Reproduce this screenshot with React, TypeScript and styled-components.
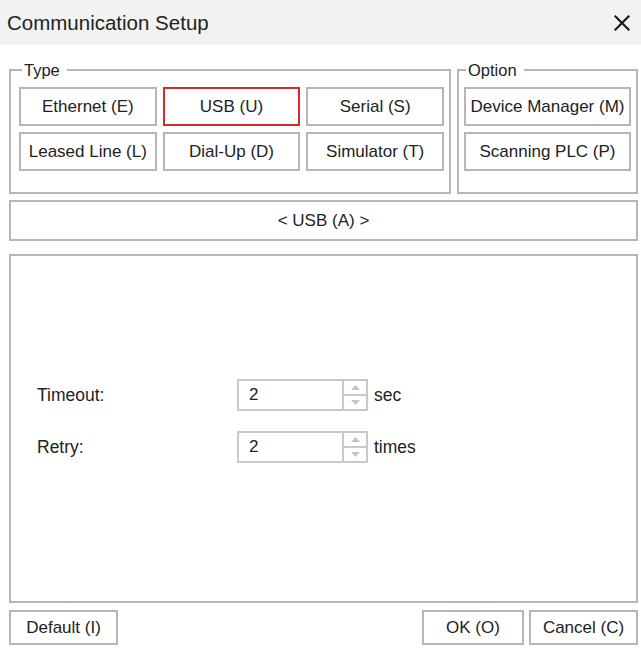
import React from "react";
import styled, { createGlobalStyle } from "styled-components";

const GlobalStyle = createGlobalStyle`
  html, body { margin: 0; padding: 0; background: #ffffff; }
  body { font-family: "Liberation Sans", Arial, sans-serif; color: #222; }
  * { box-sizing: border-box; }
`;

const Dialog = styled.div`
  width: 641px;
  height: 649px;
  background: #fff;
  display: flex;
  flex-direction: column;
`;

const TitleBar = styled.div`
  height: 45px;
  background: #f2f2f2;
  display: flex;
  align-items: center;
  justify-content: space-between;
  padding: 0 8px 0 7px;
`;

const Title = styled.div`
  font-size: 20.5px;
  color: #222;
`;

const CloseButton = styled.button`
  width: 22px;
  height: 22px;
  border: none;
  background: transparent;
  padding: 0;
  display: flex;
  align-items: center;
  justify-content: center;
  cursor: pointer;
`;

const Body = styled.div`
  flex: 1;
  display: flex;
  flex-direction: column;
  padding: 16px 3px 0 9px;
`;

const GroupRow = styled.div`
  display: flex;
  gap: 6px;
`;

const Group = styled.fieldset<{ $w?: number }>`
  margin: 0;
  min-width: 0;
  border: 2px solid #b6b6b6;
  padding: 8px 5px 21px ${(p) => (p.$w ? 8 : 5)}px;
  ${(p) => (p.$w ? `flex: 0 0 ${p.$w}px;` : `flex: 1;`)}
`;

const Legend = styled.legend<{ $indent: number }>`
  font-size: 16.5px;
  line-height: 18px;
  padding: 0 7px 0 2px;
  margin-left: ${(p) => p.$indent}px;
  color: #222;
`;

const ButtonGrid = styled.div<{ $cols: number }>`
  display: grid;
  grid-template-columns: repeat(${(p) => p.$cols}, 1fr);
  column-gap: 6px;
  row-gap: 6px;
`;

const TypeButton = styled.button<{ $active?: boolean }>`
  height: 39px;
  border: 2px solid ${(p) => (p.$active ? "#d42a2a" : "#b6b6b6")};
  background: #fff;
  font-family: "Liberation Sans", Arial, sans-serif;
  font-size: 17px;
  color: #222;
  padding: 0 1px;
  white-space: nowrap;
  cursor: pointer;
`;

const ModeBar = styled.div`
  margin-top: 6px;
  height: 41px;
  border: 2px solid #b6b6b6;
  display: flex;
  align-items: center;
  justify-content: center;
  font-size: 17px;
  color: #222;
`;

const Panel = styled.div`
  margin-top: 13px;
  height: 349px;
  border: 2px solid #b6b6b6;
  padding: 123px 0 0 26px;
  display: grid;
  grid-template-columns: 200px 131px auto;
  grid-auto-rows: 32px;
  row-gap: 20px;
  align-content: start;
  align-items: center;
`;

const FieldLabel = styled.div`
  font-size: 17.5px;
  color: #222;
`;

const Spin = styled.div`
  height: 32px;
  border: 2px solid #c9c9c9;
  display: flex;
`;

const SpinValue = styled.div`
  flex: 1;
  display: flex;
  align-items: center;
  padding-left: 10px;
  font-size: 17px;
  color: #222;
`;

const SpinArrows = styled.div`
  width: 24px;
  border-left: 2px solid #c9c9c9;
  display: flex;
  flex-direction: column;
`;

const SpinArrow = styled.div<{ $top?: boolean }>`
  flex: 1;
  display: flex;
  align-items: center;
  justify-content: center;
  ${(p) => (p.$top ? "border-bottom: 2px solid #c9c9c9;" : "")}
`;

const Unit = styled.div`
  font-size: 17.5px;
  color: #222;
  padding-left: 6px;
`;

const Footer = styled.div`
  margin-top: 7px;
  display: flex;
  justify-content: space-between;
`;

const FooterGroup = styled.div`
  display: flex;
  gap: 5px;
`;

const FooterButton = styled.button<{ $w: number }>`
  width: ${(p) => p.$w}px;
  height: 35px;
  border: 2px solid #b6b6b6;
  background: #fff;
  font-family: "Liberation Sans", Arial, sans-serif;
  font-size: 17px;
  color: #222;
  padding: 0;
  cursor: pointer;
`;

const Triangle = ({ up }: { up?: boolean }) => (
  <svg width="9" height="5" viewBox="0 0 9 5">
    <polygon points={up ? "0,5 9,5 4.5,0" : "0,0 9,0 4.5,5"} fill="#c4c4c4" />
  </svg>
);

const SpinBox = ({ value }: { value: string }) => (
  <Spin>
    <SpinValue>{value}</SpinValue>
    <SpinArrows>
      <SpinArrow $top>
        <Triangle up />
      </SpinArrow>
      <SpinArrow>
        <Triangle />
      </SpinArrow>
    </SpinArrows>
  </Spin>
);

export default function App() {
  const types = [
    "Ethernet (E)",
    "USB (U)",
    "Serial (S)",
    "Leased Line (L)",
    "Dial-Up (D)",
    "Simulator (T)",
  ];
  return (
    <>
      <GlobalStyle />
      <Dialog>
        <TitleBar>
          <Title>Communication Setup</Title>
          <CloseButton aria-label="Close">
            <svg width="16" height="16" viewBox="0 0 16 16">
              <path d="M1.5 1.5 L14.5 14.5 M14.5 1.5 L1.5 14.5" stroke="#1a1a1a" strokeWidth="2.2" strokeLinecap="square" />
            </svg>
          </CloseButton>
        </TitleBar>
        <Body>
          <GroupRow>
            <Group $w={442}>
              <Legend $indent={3}>Type</Legend>
              <ButtonGrid $cols={3}>
                {types.map((t) => (
                  <TypeButton key={t} $active={t === "USB (U)"}>
                    {t}
                  </TypeButton>
                ))}
              </ButtonGrid>
            </Group>
            <Group>
              <Legend $indent={2}>Option</Legend>
              <ButtonGrid $cols={1}>
                <TypeButton>Device Manager (M)</TypeButton>
                <TypeButton>Scanning PLC (P)</TypeButton>
              </ButtonGrid>
            </Group>
          </GroupRow>
          <ModeBar>&lt; USB (A) &gt;</ModeBar>
          <Panel>
            <FieldLabel>Timeout:</FieldLabel>
            <SpinBox value="2" />
            <Unit>sec</Unit>
            <FieldLabel>Retry:</FieldLabel>
            <SpinBox value="2" />
            <Unit>times</Unit>
          </Panel>
          <Footer>
            <FooterButton $w={109}>Default (I)</FooterButton>
            <FooterGroup>
              <FooterButton $w={102}>OK (O)</FooterButton>
              <FooterButton $w={109}>Cancel (C)</FooterButton>
            </FooterGroup>
          </Footer>
        </Body>
      </Dialog>
    </>
  );
}
